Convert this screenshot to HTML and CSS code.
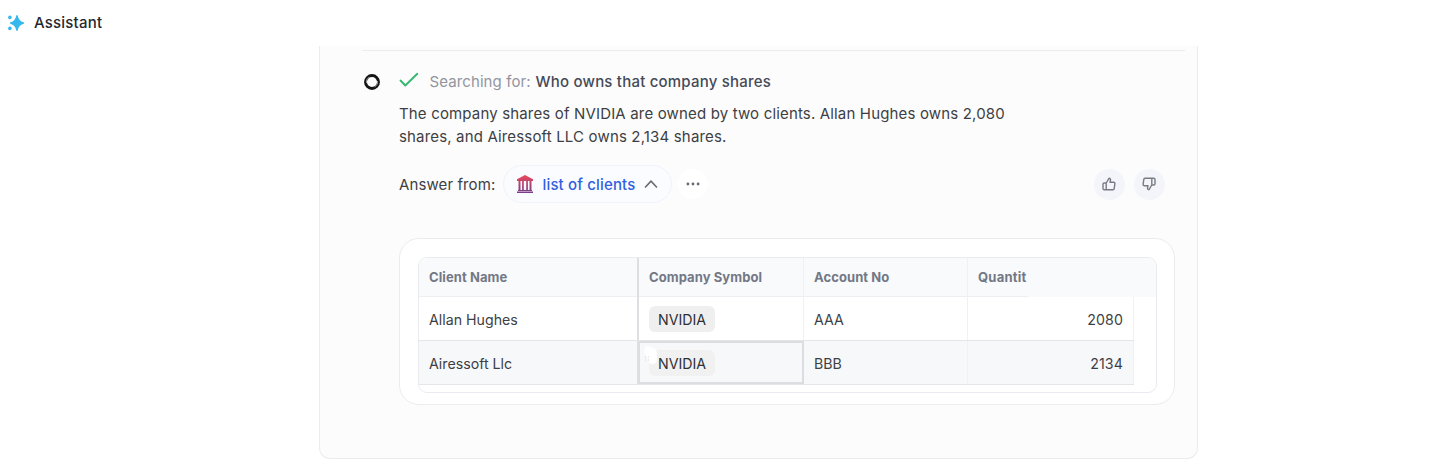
FILE: index.html
```html
<!DOCTYPE html>
<html lang="en">
<head>
<meta charset="utf-8">
<title>Assistant</title>
<link rel="stylesheet" href="styles.css">
</head>
<body>
<header class="topbar">
  <svg class="spark" width="18" height="18" viewBox="0 0 18 18" fill="#35b8ee"><path d="M10 1.800C10.800 6 12.200 7.800 16.400 9 12.200 10.200 10.800 12 10 16.200 9.200 12 7.800 10.200 3.600 9 7.800 7.800 9.200 6 10 1.800Z" stroke="#35b8ee" stroke-width="1.500" stroke-linejoin="round"/><circle cx="2.900" cy="3.400" r="1.800"/><circle cx="2.900" cy="14.400" r="1.800"/></svg>
  <h1 class="title">Assistant</h1>
</header>
<main class="panel">
  <div class="divider"></div>
  <article class="message">
    <svg class="avatar" width="18" height="18" viewBox="0 0 18 18" fill="none"><circle cx="9" cy="9" r="6.500" stroke="#151515" stroke-width="2.900"/><path d="M3.500 10A5.700 5.700 0 0 1 6.500 4.100M14.500 8A5.700 5.700 0 0 1 11.500 13.900" stroke="#bbb" stroke-width=".8"/></svg>
    <div class="body">
      <div class="search">
        <svg class="check" width="20" height="16" viewBox="0 0 20 16" fill="none" stroke="#35b86f" stroke-width="1.900" stroke-linecap="round" stroke-linejoin="round"><path d="M1.500 8.500 6.300 13.500 18.300 1.800"/></svg>
        <span class="label">Searching for:</span><span class="query">Who owns that company shares</span>
      </div>
      <p class="answer">The company shares of NVIDIA are owned by two clients. Allan Hughes owns 2,080<br>shares, and Airessoft LLC owns 2,134 shares.</p>
      <div class="source">
        <span class="from">Answer from:</span>
        <span class="pill">
          <svg width="18" height="20" viewBox="0 0 18 20"><defs><linearGradient id="g" x1="0" y1="0" x2="0" y2="20" gradientUnits="userSpaceOnUse"><stop offset=".15" stop-color="#e0485d"/><stop offset="1" stop-color="#713b91"/></linearGradient></defs><g fill="url(#g)"><path d="M9 1 17 5.200V7H1V5.200Z"/><path d="M2.500 7h2v9h-2zM6.100 7h1.700v9H6.100zM10.200 7h1.700v9h-1.700zM13.500 7h2v9h-2zM2 15.900h14v1H2zM1 17.400h16V19H1z"/></g></svg>
          <span class="list">list of clients</span>
          <svg class="chev" width="14" height="10" viewBox="0 0 14 10" fill="none" stroke="#6b6e74" stroke-width="1.700" stroke-linecap="round" stroke-linejoin="round"><path d="M1.500 8 7 2.200 12.500 8"/></svg>
        </span>
        <span class="more"><svg width="16" height="4" viewBox="0 0 16 4" fill="#666970"><circle cx="2.900" cy="2" r="1.400"/><circle cx="8" cy="2" r="1.400"/><circle cx="13.100" cy="2" r="1.400"/></svg></span>
        <span class="vote up"><svg width="14" height="14" viewBox="0 0 14 14"><path d="M4.200 6 7 1.300c1.300 0 1.700.8 1.500 1.700L8 5.300h3.700c.8 0 1.300.6 1.200 1.400l-.7 4.900c-.1.700-.6 1.100-1.200 1.100H2.200c-.7 0-1.200-.5-1.200-1.200V7.200C1 6.500 1.500 6 2.200 6h2v6.700"/></svg></span>
        <span class="vote"><svg class="down" width="14" height="14" viewBox="0 0 14 14"><path d="M4.200 6 7 1.300c1.300 0 1.700.8 1.500 1.700L8 5.300h3.700c.8 0 1.300.6 1.200 1.400l-.7 4.900c-.1.700-.6 1.100-1.200 1.100H2.200c-.7 0-1.200-.5-1.200-1.200V7.200C1 6.500 1.500 6 2.200 6h2v6.700"/></svg></span>
      </div>
      <section class="card">
        <div class="table">
          <div class="row head"><div class="cell pinned">Client Name</div><div class="cell">Company Symbol</div><div class="cell">Account No</div><div class="cell last">Quantit</div></div>
          <div class="row"><div class="cell pinned">Allan Hughes</div><div class="cell"><span class="tag">NVIDIA</span></div><div class="cell">AAA</div><div class="cell num">2080</div></div>
          <div class="row alt"><div class="cell pinned">Airessoft Llc</div><div class="cell selected"><span class="tag"><span class="name">NVIDIA</span></span><svg class="drag" width="18" height="22" viewBox="0 0 18 22"><path d="M3 2q5-2 8 1 4 1 4 6v5q0 5-5 5-4 0-4-6-5-3-3-11Z" fill="#fff"/><path d="M3 12h1M6 12h1M3 15h1M6 15h1" stroke="#d6d6d8"/></svg></div><div class="cell">BBB</div><div class="cell num">2134</div></div>
        </div>
      </section>
    </div>
  </article>
</main>
</body>
</html>
```
FILE: styles.css
```css
* { box-sizing: border-box; }
body { margin: 0; height: 470px; overflow: hidden; background: #fff; color: #3d3f44; font: 400 15px/23px Inter, "Liberation Sans", sans-serif; letter-spacing: .16px; }
svg { display: block; flex: none; }
.topbar { height: 46px; display: flex; align-items: center; gap: 9px; padding: 0 0 1px 7px; }
.title { margin: 0; font-size: 15px; font-weight: 500; letter-spacing: .2px; color: #25272c; }
.panel { width: 879px; height: 413px; margin-left: 319px; padding-top: 4px; background: #fcfcfc; border: 1px solid #ececee; border-top: 0; border-radius: 0 0 11px 11px; }
.divider { height: 1px; margin: 0 12px 0 42px; background: #ebecee; }
.message { display: flex; padding: 19px 22px 0 43px; }
.avatar { margin-top: 3px; }
.body { width: 776px; margin-left: 18px; flex: none; }
.search { display: flex; align-items: center; height: 23px; white-space: nowrap; }
.check { margin-top: -3px; }
.label { width: 106px; margin-left: 10.500px; color: #92959e; letter-spacing: .1px; }
.query { color: #454a58; font-weight: 500; letter-spacing: .21px; }
.answer { margin: 9px 0 0; white-space: nowrap; }
.source { display: flex; align-items: center; height: 38px; margin-top: 17px; white-space: nowrap; }
.from { width: 104px; letter-spacing: .1px; }
.pill { display: flex; align-items: center; width: 169px; height: 38px; padding-left: 12px; border: 1px solid #eff4fa; border-radius: 19px; background: #fafcff; }
.list { width: 94px; margin-left: 8.500px; color: #315fe0; font-weight: 500; }
.chev { margin-left: 7.500px; }
.more { display: flex; align-items: center; justify-content: center; width: 30px; height: 30px; margin-left: 6px; border-radius: 50%; background: #fff; }
.vote { display: flex; align-items: center; justify-content: center; width: 31px; height: 31px; margin-left: 9px; border-radius: 50%; background: #f4f5fa; }
.vote.up { margin-left: auto; }
.vote:last-child { margin-right: 10.500px; }
.vote path { fill: none; stroke: #777b84; stroke-width: 1.400; stroke-linejoin: round; }
.down { transform: rotate(180deg); }
.card { height: 167px; margin-top: 35px; padding: 18px 17px 12px 18px; background: #fff; border: 1px solid #ececef; border-radius: 20px; }
.table { height: 136px; border: 1px solid #e9ebf0; border-radius: 9px; overflow: hidden; font-size: 14.200px; letter-spacing: 0; }
.row { display: grid; grid-template-columns: 220px 165px 164px 166px; width: 715px; height: 44px; border-bottom: 1px solid #e4e6e9; }
.cell { position: relative; display: flex; align-items: center; padding: 1px 0 0 10px; border-right: 1px solid #f0f1f4; white-space: nowrap; }
.pinned { border-right: 2px solid #dedfe3; }
/* The header rule stops after the last column's label. */
.head { width: auto; height: 39px; grid-template-columns: 220px 165px 164px 1fr; border-bottom: 0; background: linear-gradient(#eceef2, #eceef2) 0 100% / 609px 1px no-repeat #f9fafc; color: #727885; font-size: 13px; font-weight: 700; letter-spacing: .08px; }
.head .cell { padding-top: 0; padding-bottom: 1px; }
.head .last { border-right: 0; letter-spacing: .25px; }
.row .num { justify-content: flex-end; padding-right: 10px; letter-spacing: .1px; }
.alt { background: #f7f8fa; }
.tag { height: 26px; padding: 0 9px; border-radius: 6px; background: #efeff0; line-height: 27px; color: #303134; }
.selected { border: 2px solid #dcdde0; border-left-width: 1px; padding-left: 9px; }
.selected .tag { background: #f1f1f2; }
.name { position: relative; z-index: 2; }
.drag { position: absolute; z-index: 1; left: 2px; top: 2px; }
```
